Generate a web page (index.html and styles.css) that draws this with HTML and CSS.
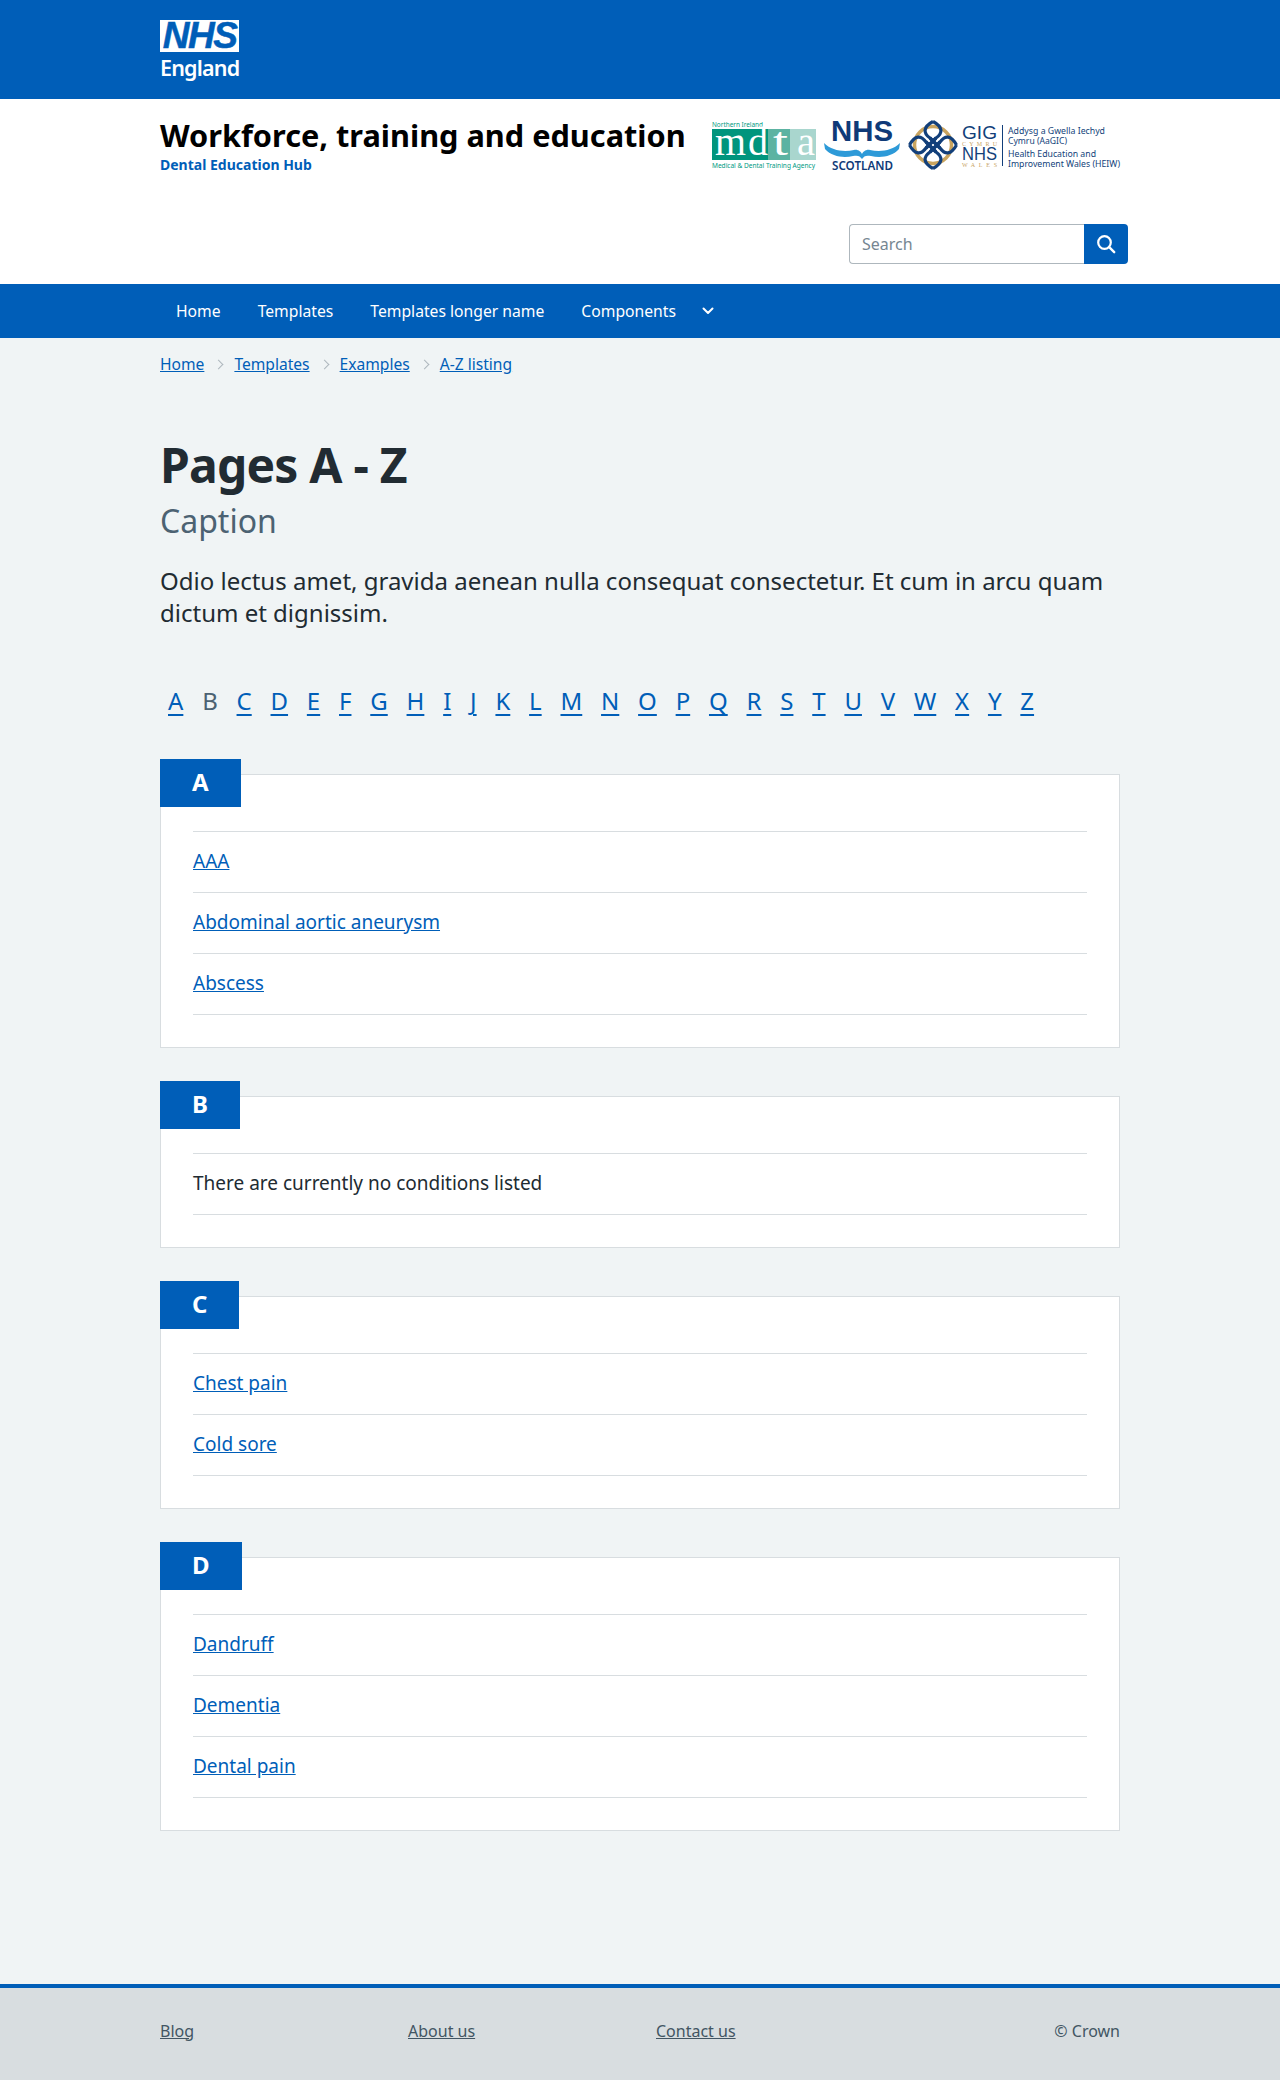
FILE: index.html
```html
<!DOCTYPE html>
<html lang="en">
<head>
<meta charset="utf-8">
<title>Pages A - Z</title>
<link rel="stylesheet" href="styles.css">
</head>
<body>
<header>
  <div class="topbar">
    <div class="wrap">
      <a class="nhs-logo" href="#">
        <span class="nhs-mark">NHS</span>
        <span class="nhs-england">England</span>
      </a>
    </div>
  </div>
  <div class="masthead">
    <div class="wrap">
      <div class="title-row">
        <div class="title-block">
          <div class="service-name">Workforce, training and education</div>
          <div class="service-sub">Dental Education Hub</div>
        </div>
        <div class="partner-logos">
          <svg width="104" height="52" viewBox="0 0 104 52">
            <text x="0" y="7" class="mdta-small" textLength="51" lengthAdjust="spacingAndGlyphs">Northern Ireland</text>
            <rect x="0" y="9" width="56" height="31" fill="#00957d"/>
            <rect x="56" y="9" width="22" height="31" fill="#5cb3a2"/>
            <rect x="78" y="9" width="26" height="31" fill="#a9d6ce"/>
            <text x="3" y="35" class="mdta-big" textLength="31" lengthAdjust="spacingAndGlyphs">m</text>
            <text x="36" y="35" class="mdta-big" textLength="20" lengthAdjust="spacingAndGlyphs">d</text>
            <text x="61" y="35" class="mdta-big" textLength="15" lengthAdjust="spacingAndGlyphs">t</text>
            <text x="85" y="35" class="mdta-big" textLength="18" lengthAdjust="spacingAndGlyphs">a</text>
            <text x="0" y="48" class="mdta-small" textLength="103" lengthAdjust="spacingAndGlyphs">Medical &amp; Dental Training Agency</text>
          </svg>
          <svg width="76" height="52" viewBox="0 0 76 52">
            <text x="7" y="21" class="scot-nhs" textLength="62" lengthAdjust="spacingAndGlyphs">NHS</text>
            <path d="M0 23C8 31 20 32 30 30 34 29 37 32 38 34 39 32 42 29 46 30 56 32 68 31 76 23L75 29C68 37 56 38 47 36 42 35 40 36 38 39 36 36 34 35 29 36 20 38 8 37 1 29Z" fill="#2d9ad8"/>
            <text x="8" y="50" class="scot-name" textLength="61" lengthAdjust="spacingAndGlyphs">SCOTLAND</text>
          </svg>
          <svg width="213" height="52" viewBox="0 0 213 52">
            <circle cx="25" cy="25" r="18.5" fill="none" stroke="#c9a45f" stroke-width="3.5"/>
            <g fill="none" stroke="#123f7a" stroke-width="3.2">
              <path d="M25 1.5C15 7 15 13 22 18L32 28M25 1.5C35 7 35 13 28 18L18 28"/>
              <path d="M25 1.5C15 7 15 13 22 18L32 28M25 1.5C35 7 35 13 28 18L18 28" transform="rotate(90 25 25)"/>
              <path d="M25 1.5C15 7 15 13 22 18L32 28M25 1.5C35 7 35 13 28 18L18 28" transform="rotate(180 25 25)"/>
              <path d="M25 1.5C15 7 15 13 22 18L32 28M25 1.5C35 7 35 13 28 18L18 28" transform="rotate(270 25 25)"/>
            </g>
            <text x="54" y="19" class="heiw-gig" textLength="35" lengthAdjust="spacingAndGlyphs">GIG</text>
            <text x="54" y="25.5" class="heiw-gold" textLength="35">CYMRU</text>
            <text x="54" y="40" class="heiw-gig" textLength="35" lengthAdjust="spacingAndGlyphs">NHS</text>
            <text x="54" y="46.5" class="heiw-gold" textLength="35">WALES</text>
            <rect x="94" y="5" width="1" height="41" fill="#123f7a"/>
            <text x="100" y="13.5" class="heiw-text" textLength="97" lengthAdjust="spacingAndGlyphs">Addysg a Gwella Iechyd</text>
            <text x="100" y="23.5" class="heiw-text" textLength="59" lengthAdjust="spacingAndGlyphs">Cymru (AaGIC)</text>
            <text x="100" y="36.5" class="heiw-text" textLength="88" lengthAdjust="spacingAndGlyphs">Health Education and</text>
            <text x="100" y="46.5" class="heiw-text" textLength="112" lengthAdjust="spacingAndGlyphs">Improvement Wales (HEIW)</text>
          </svg>
        </div>
      </div>
      <form class="search-row">
        <input class="search-input" type="search" placeholder="Search" aria-label="Search">
        <button class="search-btn" type="button" aria-label="Search">
          <svg width="24" height="24" viewBox="0 0 24 24"><circle cx="10.5" cy="10.5" r="6.3" fill="none" stroke="#fff" stroke-width="2.2"/><path d="M15.2 15.2l5 5" stroke="#fff" stroke-width="2.4" stroke-linecap="round"/></svg>
        </button>
      </form>
    </div>
  </div>
  <nav class="mainnav">
    <div class="wrap">
      <ul class="nav-list">
        <li><a href="#">Home</a></li>
        <li><a href="#">Templates</a></li>
        <li><a href="#">Templates longer name</a></li>
        <li><a href="#">Components</a></li>
        <li class="nav-more"><svg width="16" height="16" viewBox="0 0 16 16"><path d="M3.5 5.5L8 10l4.5-4.5" fill="none" stroke="#fff" stroke-width="2" stroke-linecap="round" stroke-linejoin="round"/></svg></li>
      </ul>
    </div>
  </nav>
</header>
<div class="wrap">
  <ol class="crumbs">
    <li><a href="#">Home</a></li>
    <li><a href="#">Templates</a></li>
    <li><a href="#">Examples</a></li>
    <li><a href="#">A-Z listing</a></li>
  </ol>
  <main>
    <h1>Pages A - Z</h1>
    <p class="caption">Caption</p>
    <p class="lead">Odio lectus amet, gravida aenean nulla consequat consectetur. Et cum in arcu quam dictum et dignissim.</p>
    <ul class="az">
      <li><a href="#">A</a></li><li class="az-off">B</li><li><a href="#">C</a></li><li><a href="#">D</a></li><li><a href="#">E</a></li><li><a href="#">F</a></li><li><a href="#">G</a></li><li><a href="#">H</a></li><li><a href="#">I</a></li><li><a href="#">J</a></li><li><a href="#">K</a></li><li><a href="#">L</a></li><li><a href="#">M</a></li><li><a href="#">N</a></li><li><a href="#">O</a></li><li><a href="#">P</a></li><li><a href="#">Q</a></li><li><a href="#">R</a></li><li><a href="#">S</a></li><li><a href="#">T</a></li><li><a href="#">U</a></li><li><a href="#">V</a></li><li><a href="#">W</a></li><li><a href="#">X</a></li><li><a href="#">Y</a></li><li><a href="#">Z</a></li>
    </ul>
    <section class="card">
      <h2 class="tab">A</h2>
      <ul class="rows">
        <li><a href="#">AAA</a></li>
        <li><a href="#">Abdominal aortic aneurysm</a></li>
        <li><a href="#">Abscess</a></li>
      </ul>
    </section>
    <section class="card">
      <h2 class="tab">B</h2>
      <ul class="rows">
        <li>There are currently no conditions listed</li>
      </ul>
    </section>
    <section class="card">
      <h2 class="tab">C</h2>
      <ul class="rows">
        <li><a href="#">Chest pain</a></li>
        <li><a href="#">Cold sore</a></li>
      </ul>
    </section>
    <section class="card">
      <h2 class="tab">D</h2>
      <ul class="rows">
        <li><a href="#">Dandruff</a></li>
        <li><a href="#">Dementia</a></li>
        <li><a href="#">Dental pain</a></li>
      </ul>
    </section>
  </main>
</div>
<footer>
  <div class="wrap footer-row">
    <a href="#">Blog</a>
    <a href="#">About us</a>
    <a href="#">Contact us</a>
    <span class="crown">© Crown</span>
  </div>
</footer>
</body>
</html>
```

FILE: styles.css
```css
* { box-sizing: border-box; }
html, body { margin: 0; padding: 0; }
body {
  background: #f0f4f5;
  color: #212b32;
  font-family: "Noto Sans", "Open Sans", Arial, sans-serif;
  font-size: 19px;
  line-height: 28px;
}
a { color: #005eb8; }
ul, ol { list-style: none; margin: 0; padding: 0; }
.wrap { width: 960px; margin: 0 auto; }

.topbar { background: #005eb8; height: 99px; padding-top: 20px; }
.nhs-logo { display: block; width: 79px; color: #fff; text-decoration: none; }
.nhs-mark {
  display: flex; align-items: center; justify-content: center;
  width: 79px; height: 32px;
  background: #fff; color: #005eb8;
  font: italic 700 37px/32px "Liberation Sans", Arial, sans-serif;
  letter-spacing: -1.5px; -webkit-text-stroke: 0.5px #005eb8;
}
.nhs-england { display: block; margin-top: 4px; font-size: 21.5px; line-height: 24px; font-weight: 600; letter-spacing: -0.8px; }

.masthead { background: #fff; height: 185px; }
.title-row { display: flex; justify-content: space-between; padding-top: 16px; height: 125px; }
.service-name { font-size: 30.7px; line-height: 40px; font-weight: 700; color: #000; white-space: nowrap; }
.service-sub { font-size: 14px; line-height: 16px; font-weight: 700; color: #005eb8; margin-top: 2px; }
.partner-logos { display: flex; gap: 8px; margin-top: 5px; margin-right: -1px; }
.partner-logos svg { display: block; overflow: visible; }
.mdta-small { font: 6.2px "Noto Sans", sans-serif; fill: #009a82; }
.mdta-big { font: 40px "Liberation Serif", serif; fill: #fff; }
.scot-nhs { font: 700 29px "Liberation Sans", sans-serif; fill: #0f3a78; }
.scot-name { font: 600 12.5px "Noto Sans", sans-serif; fill: #0f3a78; }
.heiw-gig { font: 18px "Liberation Sans", sans-serif; fill: #123f7a; }
.heiw-gold { font: 6px "Liberation Serif", serif; fill: #c9a45f; }
.heiw-text { font: 8.5px "Noto Sans", sans-serif; fill: #123f7a; }

.search-row { display: flex; justify-content: flex-end; margin-right: -8px; }
.search-input {
  width: 235px; height: 40px; padding: 0 12px;
  border: 1px solid #aeb7bd; border-right: 0; border-radius: 4px 0 0 4px;
  background: #fff; font: 16px "Noto Sans", sans-serif; color: #212b32; outline: 0;
}
.search-input::placeholder { color: #768692; opacity: 1; }
.search-btn {
  width: 44px; height: 40px; padding: 0; border: 0; border-radius: 0 4px 4px 0;
  background: #005eb8; display: flex; align-items: center; justify-content: center;
}

.mainnav { background: #005eb8; height: 54px; }
.nav-list { display: flex; align-items: center; height: 54px; padding-left: 16px; gap: 37px; font-size: 15.7px; }
.nav-list a { color: #fff; text-decoration: none; }
.nav-more { display: flex; margin-left: -13px; }

.crumbs { display: flex; align-items: center; gap: 30px; font-size: 15.6px; line-height: 24px; padding-top: 14px; height: 38px; }
.crumbs li { position: relative; }
.crumbs li + li::before {
  content: ""; position: absolute; left: -19px; top: 9px; width: 6px; height: 6px;
  border-top: 1.5px solid #aeb7bd; border-right: 1.5px solid #aeb7bd; transform: rotate(45deg);
}

main { padding-top: 61px; padding-bottom: 153px; }
h1 { margin: 0; font-size: 48px; line-height: 56px; font-weight: 700; color: #212b32; letter-spacing: -0.8px; }
.caption { margin: 8px 0 0; font-size: 32px; line-height: 40px; color: #4c6272; }
.lead { margin: 24px 0 0; font-size: 24px; line-height: 32px; color: #212b32; width: 960px; }
.az { display: flex; gap: 2.8px; margin-top: 56px; font-size: 24px; line-height: 32px; }
.az li { padding: 0 8px; }
.az-off { color: #4c6272; }
.az a { text-underline-offset: 4px; text-decoration-thickness: 2px; }

.card {
  display: flex; flex-direction: column; align-items: flex-start;
  background: #fff; border: 1px solid #d8dde0;
  padding: 0 32px 32px; margin-top: 48px;
}
.az + .card { margin-top: 57px; }
.tab {
  margin: -16px 0 24px -33px; padding: 7px 32px 9px;
  background: #005eb8; color: #fff;
  font-size: 24px; line-height: 32px; font-weight: 700;
}
.rows { width: 100%; border-top: 1px solid #d8dde0; }
.rows li { padding: 15px 0 17px; border-bottom: 1px solid #d8dde0; line-height: 28px; }

footer { background: #d8dde0; border-top: 4px solid #005eb8; height: 97px; }
.footer-row { display: flex; align-items: center; height: 85px; font-size: 16px; color: #425563; }
.footer-row a { color: #425563; width: 248px; text-decoration: underline; }
.crown { margin-left: auto; }
```
